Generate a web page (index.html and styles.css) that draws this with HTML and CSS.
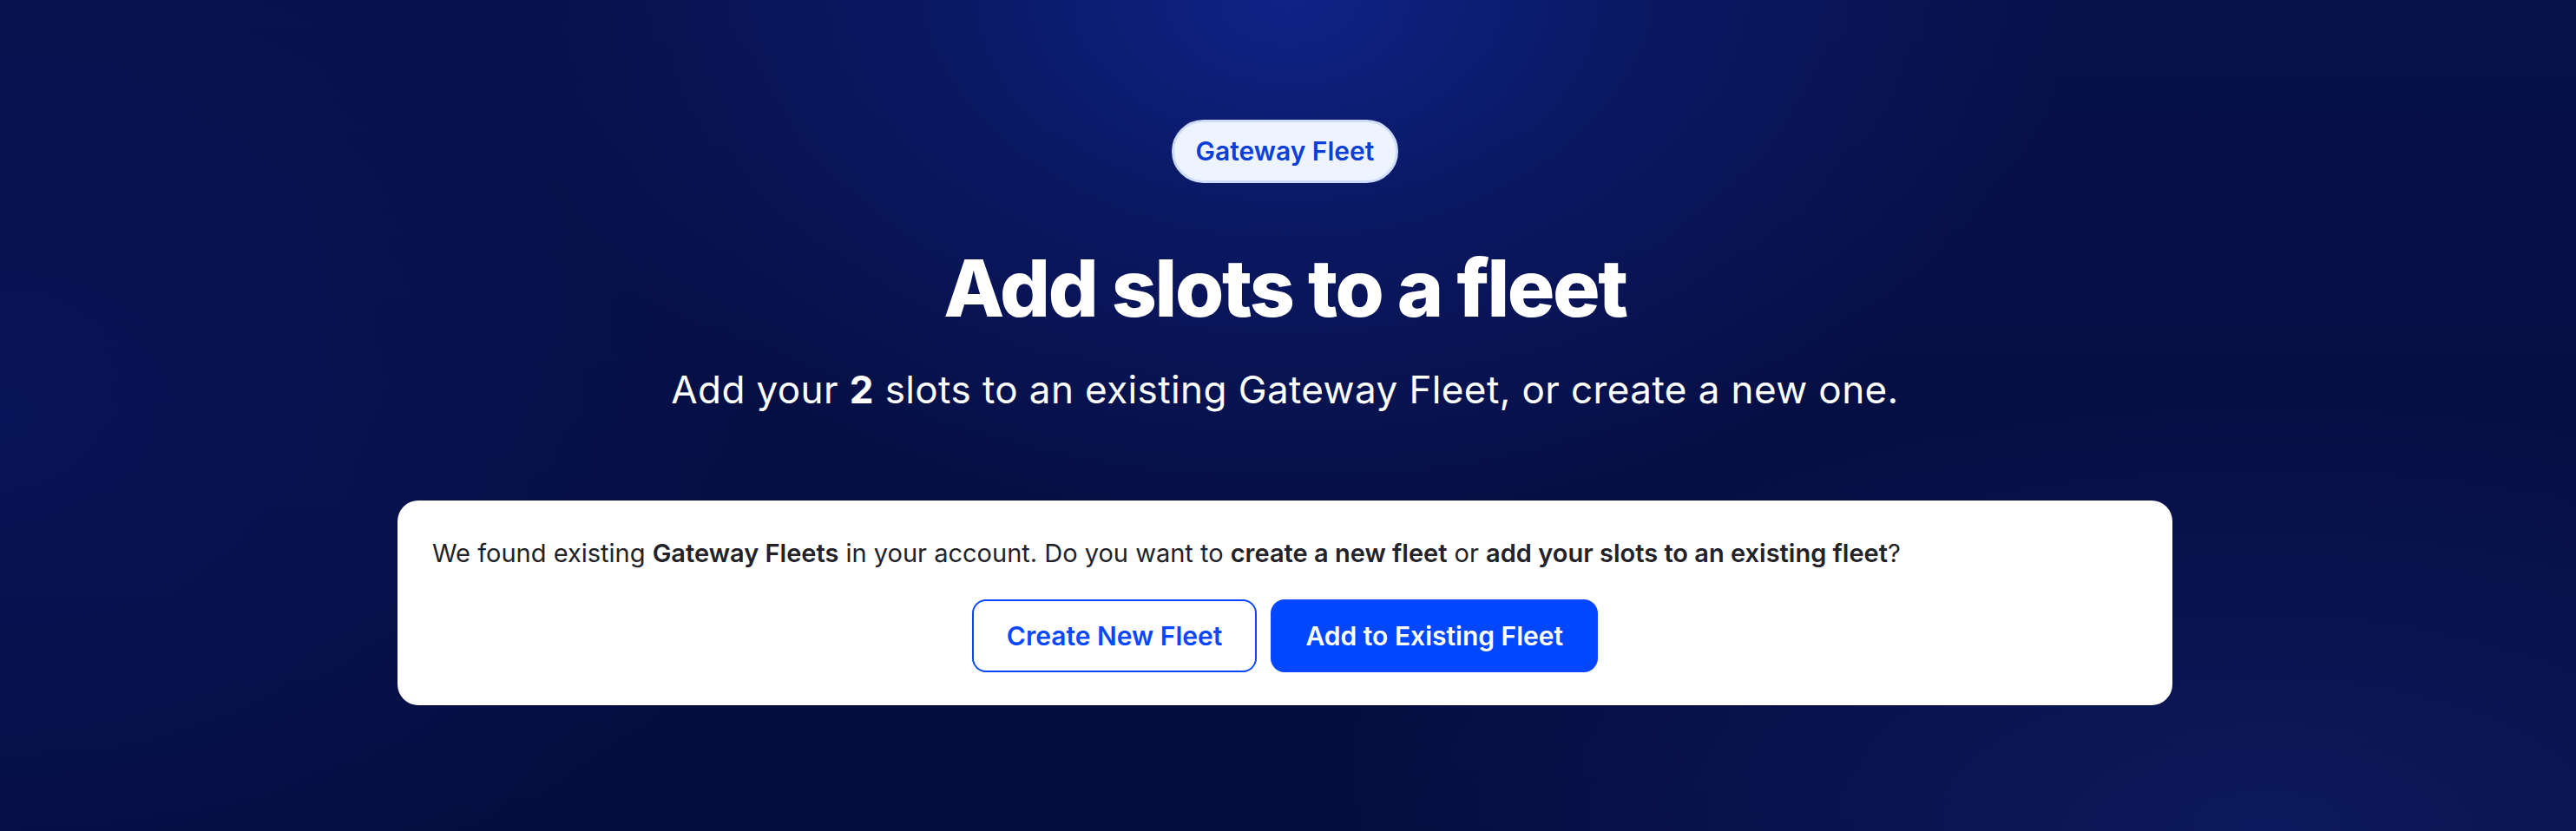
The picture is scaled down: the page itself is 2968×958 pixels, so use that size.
FILE: index.html
```html
<!DOCTYPE html>
<html lang="en">
<head>
<meta charset="utf-8">
<title>Add slots to a fleet</title>
<link rel="stylesheet" href="styles.css">
</head>
<body>
<main class="page">
  <section class="hero">
    <span class="badge">Gateway Fleet</span>
    <h1 class="title">Add slots to a fleet</h1>
    <p class="subtitle">Add your <strong>2</strong> slots to an existing Gateway Fleet, or create a new one.</p>
  </section>
  <section class="card">
    <p class="card-text">We found existing <strong>Gateway Fleets</strong> in your account. Do you want to <strong>create a new fleet</strong> or <strong>add your slots to an existing fleet</strong>?</p>
    <div class="actions">
      <button class="btn btn-outline" type="button">Create New Fleet</button>
      <button class="btn btn-primary" type="button">Add to Existing Fleet</button>
    </div>
  </section>
</main>
</body>
</html>
```
FILE: styles.css
```css
html, body {
  margin: 0;
  padding: 0;
}
body {
  width: 2968px;
  height: 958px;
  overflow: hidden;
  font-family: Inter, "Noto Sans", "Liberation Sans", sans-serif;
  background-color: #050e42;
  background-image:
    radial-gradient(ellipse 900px 620px at 50% 0%, rgba(16, 38, 145, 0.85) 0%, rgba(16, 38, 145, 0.35) 45%, rgba(16, 38, 145, 0) 100%),
    radial-gradient(ellipse 1100px 500px at 88% 100%, rgba(14, 28, 100, 0.8) 0%, rgba(14, 28, 100, 0) 100%),
    radial-gradient(ellipse 900px 700px at 0% 50%, rgba(8, 22, 95, 0.7) 0%, rgba(8, 22, 95, 0) 100%),
    linear-gradient(180deg, #07114a 0%, #050d3e 100%);
}
.page {
  display: flex;
  flex-direction: column;
  align-items: center;
  padding-top: 138px;
  padding-right: 7px;
}
.hero {
  display: flex;
  flex-direction: column;
  align-items: center;
}
.badge {
  display: inline-block;
  padding: 12px 25px;
  border: 3px solid #cddbff;
  border-radius: 999px;
  background: #eef4ff;
  color: #0b3fd8;
  font-size: 30px;
  line-height: 43px;
  font-weight: 600;
}
.title {
  margin: 66px 0 0;
  color: #ffffff;
  font-size: 91px;
  line-height: 110px;
  font-weight: 800;
  letter-spacing: -2.4px;
}
.subtitle {
  margin: 32px 0 0;
  color: #ffffff;
  font-size: 44px;
  line-height: 60px;
  font-weight: 400;
  letter-spacing: 0.4px;
}
.subtitle strong {
  font-weight: 700;
}
.card {
  margin-top: 98px;
  width: 2045px;
  box-sizing: border-box;
  padding: 40px 40px 38px;
  background: #ffffff;
  border-radius: 24px;
  display: flex;
  flex-direction: column;
}
.card-text {
  margin: 0;
  color: #222228;
  font-size: 29px;
  line-height: 42px;
  font-weight: 400;
}
.card-text strong {
  font-weight: 600;
}
.actions {
  margin-top: 32px;
  display: flex;
  justify-content: center;
  gap: 16px;
}
.btn {
  font-family: inherit;
  font-size: 30px;
  line-height: 42px;
  font-weight: 600;
  padding: 19px 38px;
  border-radius: 16px;
  border: 2px solid #0a47ff;
  cursor: pointer;
}
.btn-outline {
  background: #ffffff;
  color: #0a47ff;
}
.btn-primary {
  background: #0047ff;
  color: #ffffff;
}
```
